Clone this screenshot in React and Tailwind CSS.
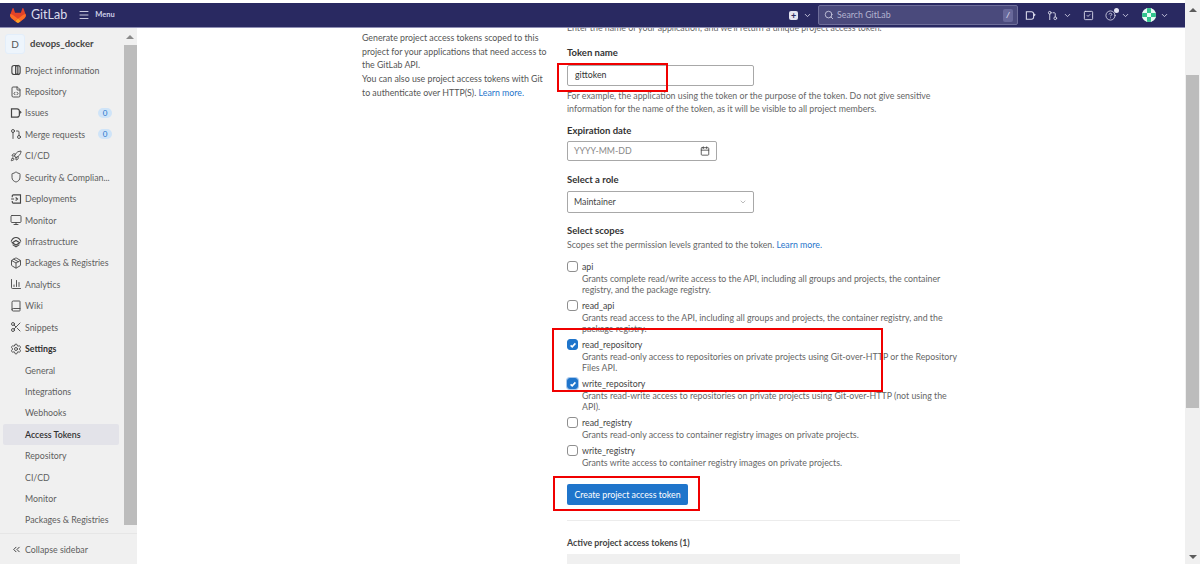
import {
  Book,
  Calendar,
  ChevronDown,
  ChevronsLeft,
  CircleHelp,
  FileCode,
  GitPullRequest,
  Menu,
  Monitor,
  Package,
  Rocket,
  Scissors,
  Search,
  Settings,
  Shield,
  SquareCheck,
  ChartColumn,
} from "lucide-react"

function Tanuki() {
  return (
    <svg viewBox="0 0 25 24" className="h-[15px] w-[16px]">
      <path fill="#E24329" d="M24.507 9.5l-.034-.09L21.082.562a.896.896 0 00-1.694.091l-2.29 7.01H7.825L5.535.653a.898.898 0 00-1.694-.09L.451 9.411.416 9.5a6.297 6.297 0 002.09 7.278l.012.01.03.022 5.16 3.867 2.56 1.935 1.554 1.176a1.051 1.051 0 001.268 0l1.555-1.176 2.56-1.935 5.197-3.89.014-.01A6.297 6.297 0 0024.507 9.5z" />
      <path fill="#FC6D26" d="M24.507 9.5l-.034-.09a11.44 11.44 0 00-4.56 2.051l-7.447 5.632 4.742 3.584 5.197-3.89.014-.01A6.297 6.297 0 0024.507 9.5z" />
      <path fill="#FCA326" d="M7.707 20.677l2.56 1.935 1.555 1.176a1.051 1.051 0 001.268 0l1.555-1.176 2.56-1.935-4.743-3.584-4.755 3.584z" />
      <path fill="#FC6D26" d="M5.01 11.461a11.43 11.43 0 00-4.56-2.05L.416 9.5a6.297 6.297 0 002.09 7.278l.012.01.03.022 5.16 3.867 4.745-3.584-7.444-5.632z" />
    </svg>
  )
}

function IssueIcon({ className }) {
  return (
    <svg viewBox="0 0 16 16" fill="none" stroke="currentColor" strokeWidth="1.6" className={className}>
      <path d="M2 2.5h7.5a3 3 0 0 1 3 3v5a3 3 0 0 1-3 3H2z" />
      <path d="M13 5.5l1.5 1.5L13 8.5" />
    </svg>
  )
}

function ProjectIcon({ className }) {
  return (
    <svg viewBox="0 0 16 16" fill="none" stroke="currentColor" strokeWidth="1.5" className={className}>
      <rect x="2.5" y="2" width="11" height="12" rx="3" />
      <path d="M7.5 1.5v13" />
      <path d="M7.5 3l3-1v12l-3-1" fill="currentColor" fillOpacity="0.15" />
    </svg>
  )
}

function DeployIcon({ className }) {
  return (
    <svg viewBox="0 0 16 16" fill="none" stroke="currentColor" strokeWidth="1.5" className={className}>
      <path d="M3 5.5V4a1.5 1.5 0 0 1 1.5-1.5H14v11H4.5A1.5 1.5 0 0 1 3 12v-1.5" />
      <path d="M1.5 8h4M7.5 6l2.5 2-2.5 2" />
    </svg>
  )
}

function InfraIcon({ className }) {
  return (
    <svg viewBox="0 0 16 16" fill="none" stroke="currentColor" strokeWidth="1.5" className={className}>
      <path d="M1.5 7.5C3 3.5 5.5 2 8 2s5 1.500 6.500 5.500" />
      <path d="M8 6l5 3-5 3-5-3z" />
      <path d="M3.500 11.500L8 14.500l4.500-3" />
    </svg>
  )
}

function NavChevron() {
  return <ChevronDown className="h-[9px] w-[9px] text-[#c9c9e0]" strokeWidth={2.5} />
}

function Header() {
  return (
    <header className="flex h-[25px] shrink-0 items-center border-b border-[#8f8fb5] bg-[#292961] pl-[10px] pr-[16px] text-[#d9d9ea]">
      <Tanuki />
      <span className="ml-[5px] text-[12.5px] leading-none text-[#dcdcec]">GitLab</span>
      <Menu className="ml-[11px] h-[12px] w-[12px]" strokeWidth={1.8} />
      <span className="ml-[5px] text-[7.5px] font-bold leading-none text-[#cfcfe8]">Menu</span>

      <div className="ml-auto flex items-center">
        <span className="flex h-[9px] w-[9px] items-center justify-center rounded-[2px] bg-[#e3e3ef] text-[9px] font-bold leading-none text-[#292961]">+</span>
        <span className="ml-[5px]"><NavChevron /></span>
        <div className="ml-[6px] flex h-[20px] w-[200px] items-center rounded-[2px] border border-[#6e6e9a] bg-[#4a4a7c] pl-[5px] pr-[4px]">
          <Search className="h-[10px] w-[10px] text-[#d0d0e4]" strokeWidth={2} />
          <span className="ml-[3px] text-[8.8px] leading-none text-[#b4b4d0]">Search GitLab</span>
          <span className="ml-auto flex h-[13px] w-[10px] items-center justify-center rounded-[2px] bg-[#68689a] text-[8px] font-bold italic text-[#d0d0e4]">/</span>
        </div>
        <IssueIcon className="ml-[7px] h-[11px] w-[11px]" />
        <GitPullRequest className="ml-[11px] h-[11px] w-[11px]" strokeWidth={2} />
        <span className="ml-[5px]"><NavChevron /></span>
        <SquareCheck className="ml-[11px] h-[11px] w-[11px]" strokeWidth={2} />
        <span className="relative ml-[11px]">
          <CircleHelp className="h-[11px] w-[11px]" strokeWidth={1.8} />
          <span className="absolute right-[-3px] top-[-2px] h-[5px] w-[5px] rounded-full bg-[#e4e4f2]" />
        </span>
        <span className="ml-[5px]"><NavChevron /></span>
        <span className="ml-[12px] grid h-[14px] w-[14px] grid-cols-3 overflow-hidden rounded-full bg-[#e8fbf4]">
          <span className="bg-[#e8fbf4]" /><span className="bg-[#31c48d]" /><span className="bg-[#e8fbf4]" />
          <span className="bg-[#31c48d]" /><span className="bg-[#e8fbf4]" /><span className="bg-[#31c48d]" />
          <span className="bg-[#e8fbf4]" /><span className="bg-[#31c48d]" /><span className="bg-[#e8fbf4]" />
        </span>
        <span className="ml-[4px]"><NavChevron /></span>
      </div>
    </header>
  )
}

const sideItems = [
  { label: "Project information", Icon: ProjectIcon },
  { label: "Repository", Icon: FileCode },
  { label: "Issues", Icon: IssueIcon, badge: "0" },
  { label: "Merge requests", Icon: GitPullRequest, badge: "0" },
  { label: "CI/CD", Icon: Rocket },
  { label: "Security & Complian...", Icon: Shield },
  { label: "Deployments", Icon: DeployIcon },
  { label: "Monitor", Icon: Monitor },
  { label: "Infrastructure", Icon: InfraIcon },
  { label: "Packages & Registries", Icon: Package },
  { label: "Analytics", Icon: ChartColumn },
  { label: "Wiki", Icon: Book },
  { label: "Snippets", Icon: Scissors },
  { label: "Settings", Icon: Settings, strong: true },
  { label: "General" },
  { label: "Integrations" },
  { label: "Webhooks" },
  { label: "Access Tokens", active: true },
  { label: "Repository" },
  { label: "CI/CD" },
  { label: "Monitor" },
  { label: "Packages & Registries" },
]

function SideRow({ item }) {
  const { label, Icon, badge, strong, active } = item
  return (
    <div
      className={`ml-[3px] mr-[4px] flex h-[21.43px] items-center rounded-[2px] pl-[7px] pr-[7px] ${
        active ? "bg-[#e3e3e9] font-semibold text-[#303030]" : strong ? "font-bold text-[#303030]" : "text-[#5e5e5e]"
      }`}
    >
      <span className="flex w-[15px] shrink-0 justify-start text-[#444]">
        {Icon ? <Icon className="h-[12px] w-[12px]" strokeWidth={1.8} /> : null}
      </span>
      <span className="whitespace-nowrap">{label}</span>
      {badge ? (
        <span className="ml-auto flex h-[10px] w-[14px] items-center justify-center rounded-full bg-[#cfe4f8] text-[8px] text-[#1f75cb]">{badge}</span>
      ) : null}
    </div>
  )
}

function Sidebar() {
  return (
    <aside className="flex w-[137px] shrink-0 flex-col bg-[#f0f0f0] text-[8.8px]">
      <div className="flex min-h-0 flex-1">
        <div className="min-w-0 flex-1 overflow-hidden">
          <div className="flex h-[31.5px] items-center pb-[1px] pl-[5px] pt-[2px]">
            <span className="flex h-[20px] w-[20px] items-center justify-center rounded-[3px] border border-[#e3eefa] bg-[#eef5fc] text-[10px] text-[#555]">D</span>
            <span className="ml-[5px] text-[9.5px] font-bold text-[#444]">devops_docker</span>
          </div>
          {sideItems.map((item) => (
            <SideRow key={item.label + (item.Icon ? "1" : "2")} item={item} />
          ))}
        </div>
        <div className="flex w-[14px] shrink-0 flex-col items-center">
          <span className="mt-[7px] h-0 w-0 border-x-[4px] border-b-[4px] border-x-transparent border-b-[#8a8a8a]" />
          <span className="mt-[6px] h-[480px] w-[13px] bg-[#bcbcbc]" />
        </div>
      </div>
      <div className="flex h-[31px] shrink-0 items-center border-t border-[#e6e6e6] pl-[11px] pt-[1px] text-[#5e5e5e]">
        <ChevronsLeft className="h-[11px] w-[11px] text-[#333]" strokeWidth={2} />
        <span className="ml-[3px]">Collapse sidebar</span>
      </div>
    </aside>
  )
}

function Scope({ name, checked, focused, children, className }) {
  return (
    <div className={`flex ${className}`}>
      <span
        className={`mt-[1px] flex h-[11px] w-[11px] shrink-0 items-center justify-center rounded-[3px] border ${
          checked ? "border-[#1f75cb] bg-[#1f75cb]" : "border-[#8f8f8f] bg-white"
        } ${focused ? "ring-1 ring-[#a8c8ec]" : ""}`}
      >
        {checked ? (
          <svg viewBox="0 0 10 10" className="h-[8px] w-[8px]" fill="none" stroke="white" strokeWidth="2">
            <path d="M2 5.500l2 1.800 4-4.300" />
          </svg>
        ) : null}
      </span>
      <div className="ml-[4px]">
        <div className="h-[13px] leading-[13px] text-[#444]">{name}</div>
        <div className="mt-[1px] leading-[10.5px] text-[#666]">{children}</div>
      </div>
    </div>
  )
}

function Field({ label, children, className }) {
  return (
    <div className={className}>
      <div className="text-[9.5px] font-bold leading-[13px] text-[#333]">{label}</div>
      {children}
    </div>
  )
}

function Content() {
  return (
    <main className="relative min-w-0 flex-1 overflow-hidden bg-white text-[8.8px] text-[#555]">
      <div className="ml-[225px] flex">
        <div className="mt-[3px] w-[190px] shrink-0 text-[#555]">
          <p className="leading-[13.7px]">
            Generate project access tokens scoped to this project for your applications that need access to the GitLab API.
          </p>
          <p className="leading-[13.7px]">
            You can also use project access tokens with Git to authenticate over HTTP(S). <span className="text-[#1f75cb]">Learn more.</span>
          </p>
        </div>
        <div className="ml-[15px] w-[393px] shrink-0">
          <p className="-mt-[7px] whitespace-nowrap leading-[13px] text-[#666]">
            Enter the name of your application, and we'll return a unique project access token.
          </p>
          <Field label="Token name" className="mt-[12px]">
            <div className="mt-[6px] flex h-[21px] w-[187px] items-center rounded-[2px] border border-[#a8a8a8] px-[7px] pb-[1px] text-[#333]">gittoken</div>
          </Field>
          <p className="mt-[3px] leading-[13px] text-[#666]">
            For example, the application using the token or the purpose of the token. Do not give sensitive information for the name of the token, as it will be visible to all project members.
          </p>
          <Field label="Expiration date" className="mt-[9px]">
            <div className="mt-[4px] flex h-[20px] w-[150px] items-center justify-between rounded-[2px] border border-[#a8a8a8] px-[6px] text-[#888]">
              YYYY-MM-DD
              <Calendar className="h-[10px] w-[10px] text-[#444]" strokeWidth={2} />
            </div>
          </Field>
          <Field label="Select a role" className="mt-[12px]">
            <div className="mt-[5px] flex h-[22px] w-[187px] items-center justify-between rounded-[2px] border border-[#a8a8a8] pl-[6px] pr-[6px] text-[#444]">
              Maintainer
              <ChevronDown className="h-[8px] w-[8px] text-[#999]" strokeWidth={2} />
            </div>
          </Field>
          <Field label="Select scopes" className="mt-[11px]">
            <p className="mt-[1px] leading-[13px] text-[#666]">
              Scopes set the permission levels granted to the token. <span className="text-[#1f75cb]">Learn more.</span>
            </p>
          </Field>
          <Scope name="api" className="mt-[9px]">
            Grants complete read/write access to the API, including all groups and projects, the container registry, and the package registry.
          </Scope>
          <Scope name="read_api" className="mt-[4px]">
            Grants read access to the API, including all groups and projects, the container registry, and the package registry.
          </Scope>
          <Scope name="read_repository" checked className="mt-[4px]">
            Grants read-only access to repositories on private projects using Git-over-HTTP or the Repository Files API.
          </Scope>
          <Scope name="write_repository" checked focused className="mt-[4px]">
            Grants read-write access to repositories on private projects using Git-over-HTTP (not using the API).
          </Scope>
          <Scope name="read_registry" className="mt-[4px]">
            Grants read-only access to container registry images on private projects.
          </Scope>
          <Scope name="write_registry" className="mt-[3px]">
            Grants write access to container registry images on private projects.
          </Scope>
          <button className="mt-[16px] flex h-[21px] w-[121px] items-center justify-center rounded-[2px] bg-[#1f75cb] text-white">
            Create project access token
          </button>
          <div className="mt-[15px] border-t border-[#ececec]" />
          <div className="mt-[15px] font-bold leading-[13px] text-[#444]">Active project access tokens (1)</div>
          <div className="mt-[5px] h-[30px] bg-[#f0f0f0]" />
        </div>
      </div>
      {/* red annotation boxes from the original screenshot */}
      <span className="absolute left-[420px] top-[35px] h-[29px] w-[111px] border-2 border-[#f00000]" />
      <span className="absolute left-[415px] top-[300px] h-[64px] w-[331px] border-2 border-[#f00000]" />
      <span className="absolute left-[416px] top-[448px] h-[35px] w-[147px] border-2 border-[#f00000]" />
    </main>
  )
}

export default function App() {
  return (
    <div
      className="flex h-[564px] w-[1200px] overflow-hidden bg-white"
      style={{ fontFamily: 'Lato, "Noto Sans", sans-serif' }}
    >
      <div className="flex min-w-0 flex-1 flex-col pt-[3px]">
        <Header />
        <div className="flex min-h-0 flex-1">
          <Sidebar />
          <Content />
        </div>
      </div>
      <div className="flex w-[15px] shrink-0 flex-col items-center bg-[#f0f0f0]">
        <span className="mt-[8px] h-0 w-0 border-x-[4px] border-b-[4px] border-x-transparent border-b-[#5c5c5c]" />
        <span className="mt-[63px] h-[333px] w-[13px] bg-[#bcbcbc]" />
        <span className="mb-[5px] mt-auto h-0 w-0 border-x-[4px] border-t-[4px] border-x-transparent border-t-[#5c5c5c]" />
      </div>
    </div>
  )
}
